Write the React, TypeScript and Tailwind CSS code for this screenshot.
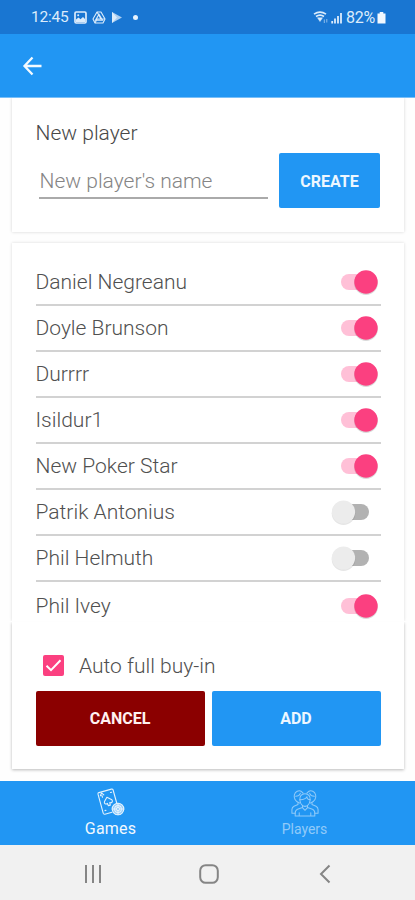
import React from "react";

const players = [
  { name: "Daniel Negreanu", on: true },
  { name: "Doyle Brunson", on: true },
  { name: "Durrrr", on: true },
  { name: "Isildur1", on: true },
  { name: "New Poker Star", on: true },
  { name: "Patrik Antonius", on: false },
  { name: "Phil Helmuth", on: false },
  { name: "Phil Ivey", on: true },
];

function Toggle({ on }: { on: boolean }) {
  return (
    <svg width="52" height="30" viewBox="0 0 52 30" className="block shrink-0">
      {on ? (
        <>
          <rect x="12" y="7" width="34" height="16" rx="8" fill="#ffc0d7" />
          <circle cx="37" cy="16.2" r="11.8" fill="#000" opacity="0.15" />
          <circle cx="37" cy="15" r="11.7" fill="#fb4080" />
        </>
      ) : (
        <>
          <rect x="6" y="7" width="34" height="16" rx="8" fill="#b2b2b2" />
          <circle cx="14.5" cy="16.2" r="11.8" fill="#000" opacity="0.1" />
          <circle cx="14.5" cy="15" r="11.6" fill="#ececec" />
        </>
      )}
    </svg>
  );
}

function StatusBar() {
  return (
    <div className="flex h-[34px] shrink-0 items-center bg-[#1976d2] pl-[31px] pr-[29px] pt-px text-[#dcecfb]">
      <span className="w-[38px] whitespace-nowrap text-[15.5px] leading-[33px] tracking-[-0.2px]">12:45</span>
      <svg width="13" height="13" viewBox="0 0 13 13" className="ml-[5px]">
        <rect x="1" y="1" width="11" height="11" rx="1.2" fill="none" stroke="currentColor" strokeWidth="1.7" />
        <path d="M2 10.5V8.5l2.5-2 2 1.8L9 6l2 2v3H2z" fill="currentColor" />
        <circle cx="4.2" cy="4.2" r="1" fill="currentColor" />
      </svg>
      <svg width="14" height="13" viewBox="0 0 14 13" className="ml-[5px]" fill="none" stroke="currentColor" strokeWidth="1.1">
        <path d="M5 1h4l4 7-2 4H3L1 8z" strokeLinejoin="round" />
        <path d="M7 3.3 3.5 9.3h7z M3 12l2-4h8M5 1l4 7" />
      </svg>
      <svg width="12" height="13" viewBox="0 0 12 13" className="ml-[5px]">
        <path d="M1 1v11l10-5.5z" fill="currentColor" opacity="0.75" />
        <path d="M1 1v11l5-5.5z" fill="currentColor" />
      </svg>
      <span className="ml-[10px] h-[5px] w-[5px] rounded-full bg-[#e5f2fe]" />
      <span className="flex-1" />
      <svg width="30" height="14" viewBox="0 0 30 14" fill="none" stroke="currentColor">
        <path d="M1 3.2q6-4.2 12 0M3 5.5q4-2.8 8 0" strokeWidth="1.6" />
        <path d="M4.5 6.8h5L7 10.5z" fill="currentColor" strokeWidth=".5" />
        <path d="M11.3 12V8.5M13.8 8v3.5" strokeWidth="1" opacity=".6" />
        <path d="M19.2 10v2.5M22 7.5v5M25 5v7.5M28 2v10.5" strokeWidth="1.8" />
      </svg>
      <span className="ml-[3px] w-[31px] whitespace-nowrap text-[16px] leading-[33px] tracking-[-0.3px]">82%</span>
      <svg width="9" height="12" viewBox="0 0 9 12">
        <path d="M2.7 0h3.6v1.5H8.5v10H.5v-10h2.2z" fill="#f1f8ff" />
      </svg>
    </div>
  );
}

function GamesIcon() {
  return (
    <svg width="28" height="28" viewBox="0 0 28 28" fill="none" stroke="#e3f2fd" strokeWidth="1.1" strokeLinejoin="round" strokeLinecap="round">
      <path d="M15 24.3 7.9 26.2Q6.6 26.5 6.2 25.2L1 6.2Q.7 5 1.9 4.6L14.4 1.1Q15.7.8 16.1 2L20 16" />
      <path d="M3.4 7.8 4.5 4.9l2.3 2M5.5 9.3 4.8 7.4" />
      <path d="M9.9 9.3 7.5 13.5c-.8 2 1.4 3.3 2.8 1.8l1 2.3 2-.5-.5-2.5c2 .8 3.4-1.2 2.1-2.8z" />
      <path d="m13.5 4.5 1.1-.3M8 22.6l1-.3" />
      <circle cx="21" cy="21" r="5.8" fill="#8fcafa" />
      <circle cx="21" cy="21" r="3.4" />
      <path d="m21 18.8 2.2 2.2-2.2 2.2-2.2-2.2zM21 15.2v2M21 24.8v2M15.2 21h2M24.8 21h2" />
    </svg>
  );
}

function PlayersIcon() {
  return (
    <svg width="28" height="29" viewBox="0 0 30 30" preserveAspectRatio="none" fill="none" stroke="#90caf9" strokeWidth="1.1" strokeLinejoin="round" strokeLinecap="round">
      <path d="M9.2 14.6C4.4 13.2 2.8 9 3.6 6 4.5 2.6 8.3.8 11.2 2.6L13 4.3M20.8 14.6C25.6 13.2 27.2 9 26.4 6 25.5 2.6 21.7.8 18.8 2.6L17 4.3" />
      <path d="M5 7.5c2.3 0 4.2-1 5-3M25 7.5c-2.3 0-4.2-1-5-3" />
      <path d="M15 5c-4 0-6 2.8-5.5 6.5C10 15.2 12.4 18 15 18s5-2.8 5.5-6.5C21 7.8 19 5 15 5z" />
      <path d="M9.6 11c3.3.2 6-.8 7.5-3 0 2 1.4 3 3.3 3" />
      <path d="M12.3 17v2.2L7 21c-1.8.7-2.5 2-2.5 4v3h21v-3c0-2-.7-3.3-2.5-4l-5.3-1.8V17M12.3 19.2 15 22l2.7-2.8M8.8 24.5V28M21.2 24.5V28" />
      <path d="M7.5 14v2L3.2 17.8C1.8 18.5 1 19.5 1 21.2V25h3.5M22.5 14v2l4.3 1.8c1.4.7 2.2 1.7 2.2 3.4V25h-3.5" />
    </svg>
  );
}

const cardSides = "mx-3 w-[392px] shrink-0 bg-white pl-[23.5px] pr-[23.5px]";

export default function App() {
  return (
    <div className="flex h-[900px] w-[415px] flex-col overflow-hidden bg-[#fefefe] font-['Roboto',sans-serif] text-[#505050]">
      <StatusBar />
      <header className="flex h-[64px] shrink-0 items-center border-b border-[#79bff8] bg-[#2196f3] pl-[22px]">
        <svg width="21" height="20" viewBox="0 0 21 20" fill="none" stroke="#f3faff" strokeWidth="2.3">
          <path d="M10.5 1.5 2.5 10l8 8.5M2.5 10H19.5" />
        </svg>
      </header>

      <section className={`${cardSides} h-[134px] shadow-[0_0_3px_rgba(0,0,0,0.17)] [clip-path:inset(0_-4px_-4px_-4px)]`}>
        <h1 className="pt-[23px] text-[21px] font-light leading-6 text-[#484848]">New player</h1>
        <div className="mt-[8px] flex items-start">
          <div className="ml-[3.5px] h-[46px] w-[229px] whitespace-nowrap border-b-2 border-[#aaaaaa] pl-[0.5px] pt-[16px] text-[21px] font-light leading-6 text-[#858585]">
            New player's name
          </div>
          <button className="ml-[11px] h-[55px] w-[101px] rounded-[2px] bg-[#2196f3] pt-[2px] text-[16px] font-bold text-[#edf7ff]">CREATE</button>
        </div>
      </section>

      <section className={`${cardSides} mt-[11px] h-[378px] pt-[16.5px] shadow-[0_0_3px_rgba(0,0,0,0.15)] [clip-path:inset(-4px_-4px_0_-4px)]`}>
        {players.map((p, i) => (
          <div
            key={p.name}
            className={`flex h-[46.15px] w-[345px] items-center justify-between ${i < players.length - 1 ? "border-b-2 border-[#d2d2d2]" : ""}`}
          >
            <span className="text-[21px] font-light leading-6">{p.name}</span>
            <Toggle on={p.on} />
          </div>
        ))}
      </section>

      <section className={`${cardSides} mt-px h-[147px] shadow-[0_1px_3px_rgba(0,0,0,0.27)] [clip-path:inset(0_-4px_-4px_-4px)]`}>
        <label className="flex h-[69px] items-center pl-[7.5px] pt-[18px]">
          <svg width="21" height="21" viewBox="0 0 21 21">
            <rect width="21" height="21" rx="2" fill="#fb4080" />
            <path d="m3.5 10.7 4.5 4.4 9.5-9.8" fill="none" stroke="#fff" strokeWidth="2" />
          </svg>
          <span className="ml-[15px] text-[21px] font-light leading-6">Auto full buy-in</span>
        </label>
        <div className="flex gap-[7px]">
          <button className="h-[55px] w-[169px] rounded-[2px] bg-[#8b0000] pt-px text-[16px] font-bold text-[#fff1f1]">CANCEL</button>
          <button className="h-[55px] w-[169px] rounded-[2px] bg-[#2196f3] pt-px text-[16px] font-bold text-[#edf7ff]">ADD</button>
        </div>
      </section>

      <nav className="mt-auto grid h-[64px] shrink-0 grid-cols-[221px_167px] bg-[#2196f3]">
        <div className="flex flex-col items-center pt-[7px] text-[16px] leading-[19px] tracking-[0.2px] text-[#f2f9ff]">
          <GamesIcon />
          <span className="mt-[3px]">Games</span>
        </div>
        <div className="flex flex-col items-center pt-[8px] text-[14px] leading-[18px] text-[#90caf9]">
          <PlayersIcon />
          <span className="mt-[2px]">Players</span>
        </div>
      </nav>
      <div className="flex h-[55px] shrink-0 items-center bg-[#f1f1f1] pl-[84px] pt-[2px]">
        <svg width="18" height="18" viewBox="0 0 18 18" stroke="#858585" strokeWidth="2">
          <path d="M2 0v18M9 0v18M16 0v18" />
        </svg>
        <svg width="20" height="20" viewBox="0 0 20 20" className="ml-[97px]">
          <rect x="1.2" y="1.2" width="17.6" height="17.6" rx="5.5" fill="none" stroke="#858585" strokeWidth="2" />
        </svg>
        <svg width="12" height="20" viewBox="0 0 12 20" className="ml-[100px]" fill="none" stroke="#858585" strokeWidth="2">
          <path d="M10.5 1.5 2 10l8.5 8.5" />
        </svg>
      </div>
    </div>
  );
}
